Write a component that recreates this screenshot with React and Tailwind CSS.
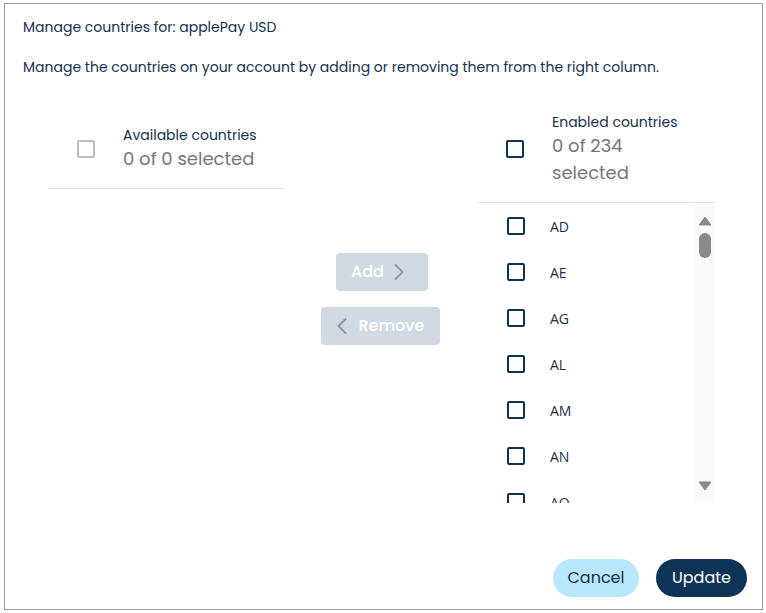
import React from "react";

const items = ["AD", "AE", "AG", "AL", "AM", "AN", "AO", "AQ"];

function Box({ dark }) {
  return (
    <span
      className={
        dark
          ? "block w-[18px] h-[18px] border-2 border-[#0d3356] rounded-[2px]"
          : "block w-[18px] h-[18px] border-2 border-[#bdbdbd] rounded-[2px]"
      }
    />
  );
}

export default function App() {
  return (
    <div className="w-[766px] h-[613px] bg-white pt-[3px] pl-[4px] font-['Poppins','DejaVu_Sans',sans-serif]">
      <div className="w-[759px] h-[607px] border border-[#9a9a9a] flex flex-col">
        <div className="pl-[18px] pt-[13px] text-[14px] text-[#17304d] leading-[20px]">
          Manage countries for: applePay USD
        </div>
        <div className="pl-[18px] pt-[20px] text-[14px] text-[#17304d] leading-[20px]">
          Manage the countries on your account by adding or removing them from the right column.
        </div>
        <div className="flex items-start pl-[43px] pt-[17px]">
          {/* left column */}
          <div className="w-[238px] mt-[14px]">
            <div className="flex items-center border-b border-[#e2e2e2] pt-[17px] pb-[16px]">
              <div className="pl-[29px] pr-[28px]">
                <Box />
              </div>
              <div>
                <div className="text-[14px] text-[#17304d] leading-[20px]">Available countries</div>
                <div className="text-[18px] text-[#767676] leading-[27px]">0 of 0 selected</div>
              </div>
            </div>
          </div>
          {/* middle */}
          <div className="w-[192px] flex flex-col items-center pt-[159px] gap-[16px]">
            <div className="w-[92px] h-[38px] rounded-[4px] bg-[#d1dae3] flex items-center pl-[15px] gap-[9px]">
              <span className="text-[16px] font-medium text-white leading-[20px]">Add</span>
              <svg width="12" height="18" viewBox="0 0 12 18" fill="none">
                <path d="M2.5 2 L9.5 9 L2.5 16" stroke="#8f969d" strokeWidth="2" strokeLinecap="round" strokeLinejoin="round" />
              </svg>
            </div>
            <div className="w-[119px] h-[38px] rounded-[4px] bg-[#d1dae3] flex items-center pl-[15px] gap-[11px] -translate-x-[2px]">
              <svg width="12" height="18" viewBox="0 0 12 18" fill="none">
                <path d="M9.5 2 L2.5 9 L9.5 16" stroke="#8f969d" strokeWidth="2" strokeLinecap="round" strokeLinejoin="round" />
              </svg>
              <span className="text-[16px] font-medium text-white leading-[20px]">Remove</span>
            </div>
          </div>
          {/* right column */}
          <div className="w-[237px]">
            <div className="flex items-center border-b border-[#e2e2e2] pt-[18px] pb-[16px]">
              <div className="pl-[28px] pr-[28px]">
                <Box dark />
              </div>
              <div className="w-[120px]">
                <div className="text-[14px] text-[#17304d] leading-[20px] whitespace-nowrap">Enabled countries</div>
                <div className="text-[18px] text-[#767676] leading-[27px] w-[100px]">0 of 234 selected</div>
              </div>
            </div>
            <div className="flex h-[300px]">
              <div className="flex-1 overflow-hidden">
                {items.map((c) => (
                  <div key={c} className="h-[46px] flex items-center">
                    <div className="pl-[29px] pr-[25px]">
                      <Box dark />
                    </div>
                    <span className="text-[14px] text-[#17304d] font-['Open_Sans',sans-serif]">{c}</span>
                  </div>
                ))}
              </div>
              <div className="w-[20px] bg-[#fafafa] flex flex-col items-center pt-[13px]">
                <svg width="14" height="10" viewBox="0 0 14 10">
                  <path d="M7 1 L13 9 L1 9 Z" fill="#8a8a8a" stroke="#8a8a8a" strokeLinejoin="round" />
                </svg>
                <div className="mt-[7px] w-[12px] h-[25px] rounded-[6px] bg-[#8a8a8a]" />
                <div className="flex-1" />
                <svg width="14" height="10" viewBox="0 0 14 10" className="mb-[12px]">
                  <path d="M1 1 L13 1 L7 9 Z" fill="#8a8a8a" stroke="#8a8a8a" strokeLinejoin="round" />
                </svg>
              </div>
            </div>
          </div>
        </div>
        <div className="flex-1" />
        <div className="flex justify-end gap-[17px] pr-[15px] pb-[12px]">
          <div className="w-[86px] h-[38px] rounded-full bg-[#b8e6fb] flex items-center justify-center text-[16px] text-[#17304d]">
            Cancel
          </div>
          <div className="w-[91px] h-[38px] rounded-full bg-[#0d3356] flex items-center justify-center text-[16px] text-white">
            Update
          </div>
        </div>
      </div>
    </div>
  );
}
